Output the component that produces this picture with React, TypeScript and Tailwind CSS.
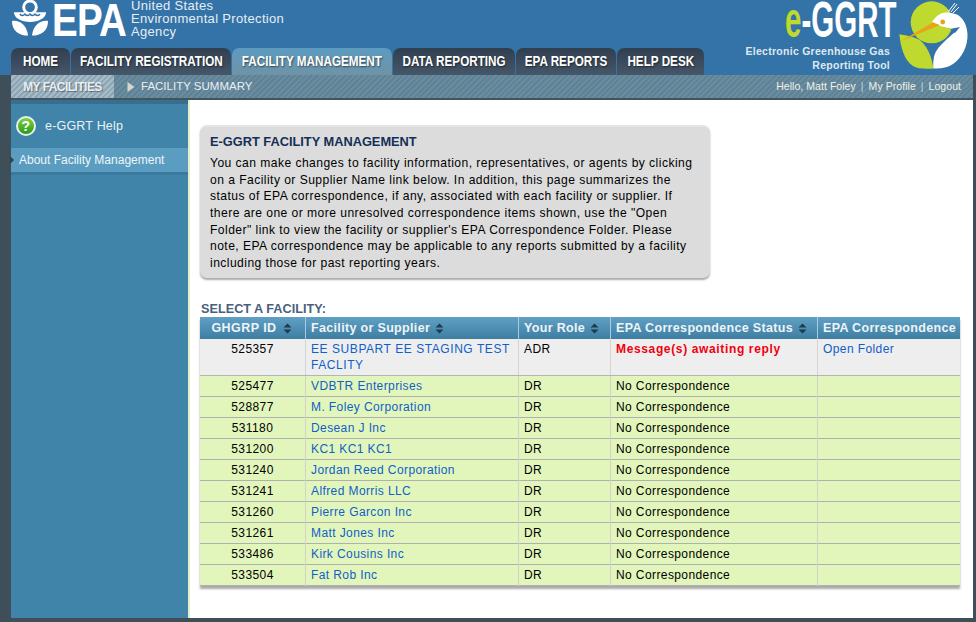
import React from "react";

const rows: [string, string][] = [
  ["525477", "VDBTR Enterprises"],
  ["528877", "M. Foley Corporation"],
  ["531180", "Desean J Inc"],
  ["531200", "KC1 KC1 KC1"],
  ["531240", "Jordan Reed Corporation"],
  ["531241", "Alfred Morris LLC"],
  ["531260", "Pierre Garcon Inc"],
  ["531261", "Matt Jones Inc"],
  ["533486", "Kirk Cousins Inc"],
  ["533504", "Fat Rob Inc"],
];

const Sort = () => (
  <svg width="9" height="11" viewBox="0 0 9 11" className="inline-block shrink-0">
    <path d="M4.5 0.5 L8.5 4.5 H0.5 Z M4.5 10.5 L8.5 6.5 H0.5 Z" fill="#1f3a4d" />
  </svg>
);

const Tab = ({ label, w, active }: { label: string; w: string; active?: boolean }) => (
  <div
    className={
      "h-[27px] rounded-t-[7px] flex items-center justify-center text-[15px] font-bold text-white " +
      w +
      (active
        ? " bg-gradient-to-b from-[#5b9bc0] to-[#6f93a6]"
        : " bg-gradient-to-b from-[#303f50] to-[#46576a]")
    }
  >
    <span className="inline-block whitespace-nowrap scale-x-[0.78] [text-shadow:1px_1px_2px_rgba(0,0,0,0.55)]">{label}</span>
  </div>
);

const EpaMark = () => (
  <svg width="37" height="37" viewBox="0 0 38 37" className="shrink-0">
    <circle cx="18.5" cy="7" r="6.5" fill="none" stroke="#fff" strokeWidth="3" />
    <path d="M2 12 H35 C35 18 27 22 18.5 22 C10 22 2 18 2 12 Z" fill="#fff" />
    <path d="M8 14 q3 3 5.2 0 q3 3 5.2 0 q3 3 5.2 0 q3 3 5.2 0" stroke="#3473a8" strokeWidth="1.5" fill="none" />
    <path d="M0 21 C8 20 15 25 16.5 36 C7 36 0 31 0 21 Z" fill="#fff" />
    <path d="M37 21 C29 20 22 25 20.5 36 C30 36 37 31 37 21 Z" fill="#fff" />
  </svg>
);

const Bird = () => (
  <svg width="72" height="72" viewBox="0 0 72 72" className="shrink-0">
    <circle cx="33.7" cy="22.3" r="21" fill="#bfd92f" />
    <path d="M1.3 34.3 C12 36 20 38 24 42 C30 48 34 58 35.3 68.5 C28 69 20 69 15 66 C6 60 3 48 1.3 34.3 Z" fill="#bfd92f" />
    <path d="M34 21.7 C38 16 42 13 46 12.7 C50 12 56 13 60 15 C66 19 69 26 69.5 34 C70 46 64 58 55 64 C49 68 42 69 35.3 68.5 C35 60 36 54 39 50 C42 45 50 38 57 32 L52 28 C46 27 40 26 34 21.7 Z" fill="#fff" />
    <path d="M52 29 L62 27 L57 33 Z" fill="#3473a8" />
    <path d="M3 41 L35 22.5 L42 25 L20 34 Z" fill="#e8a317" />
    <circle cx="44.7" cy="22" r="2.4" fill="#e8a317" />
    <path d="M50 12 L57 3 M53 12 L59 4 M55 13 L61 7" stroke="#fff" strokeWidth="1" fill="none" />
  </svg>
);

export default function App() {
  return (
    <div className="w-[976px] h-[622px] overflow-hidden bg-[#3f4f59] flex flex-col font-['Liberation_Sans',Arial,sans-serif]">
      <header className="h-[75px] shrink-0 bg-[#3473a8] flex justify-between">
        <div className="flex flex-col justify-between pl-[11px]">
          <div className="flex items-start pl-[1px] h-[37px]">
            <EpaMark />
            <div className="w-[76px] h-[37px] ml-[3px] mr-[3px]">
              <span className="inline-block whitespace-nowrap text-white font-bold text-[47px] leading-[37px] tracking-[-1px] scale-x-[0.82] origin-left mt-[1px]">EPA</span>
            </div>
            <div className="text-[#e6eef4] text-[13px] leading-[13px] tracking-[0.33px] -mt-[1px]">
              United States
              <br />
              Environmental Protection
              <br />
              Agency
            </div>
          </div>
          <nav className="flex gap-[1px]">
            <Tab label="HOME" w="w-[59px]" />
            <Tab label="FACILITY REGISTRATION" w="w-[160px]" />
            <Tab label="FACILITY MANAGEMENT" w="w-[160px]" active />
            <Tab label="DATA REPORTING" w="w-[122px]" />
            <Tab label="EPA REPORTS" w="w-[100px]" />
            <Tab label="HELP DESK" w="w-[87px]" />
          </nav>
        </div>
        <div className="flex items-start pr-[6px]">
          <div className="flex flex-col items-end mr-[8px]">
            <div className="w-[105px] h-[38px] mt-[1px]">
              <div className="inline-block whitespace-nowrap text-[50px] leading-[38px] font-bold scale-x-[0.59] origin-left">
                <span className="text-[#bfd92f]">e</span>
                <span className="text-white">-GGRT</span>
              </div>
            </div>
            <div className="text-[#dfe9f0] text-[10.5px] font-bold text-right leading-[14px] mt-[5px] tracking-[0.27px]">
              Electronic Greenhouse Gas
              <br />
              Reporting Tool
            </div>
          </div>
          <Bird />
        </div>
      </header>

      <div className="h-[25px] shrink-0 ml-[11px] mr-[3px] flex items-center justify-between bg-[repeating-linear-gradient(135deg,#5f8296_0,#5f8296_2px,#6a8c9f_2px,#6a8c9f_4px)] border-b-[2px] border-[#44545e] text-[12px]">
        <div className="flex items-center h-full">
          <div className="w-[103px] h-full flex items-center justify-center font-bold text-[#e8eff3] bg-[repeating-linear-gradient(135deg,#8ca6b5_0,#8ca6b5_2px,#a7bbc6_2px,#a7bbc6_4px)] [text-shadow:1px_1px_1px_rgba(0,0,0,0.4)] tracking-[-0.55px]">
            MY FACILITIES
          </div>
          <svg width="8" height="10" viewBox="0 0 8 10" className="ml-[13px]">
            <path d="M0.5 0 L7.5 5 L0.5 10 Z" fill="#d6d6d0" />
          </svg>
          <span className="ml-[6px] text-[#e8eff3] text-[11.5px]">FACILITY SUMMARY</span>
        </div>
        <div className="text-[10.5px] flex items-center gap-[5px] pr-[12px] tracking-[0.05px] text-[#eef3e6]">
          <span>Hello, Matt Foley</span>
          <span className="text-[#b9d7e6]">|</span>
          <span>My Profile</span>
          <span className="text-[#b9d7e6]">|</span>
          <span>Logout</span>
        </div>
      </div>

      <div className="flex-1 min-h-0 ml-[11px] mr-[3px] mb-[4px] flex bg-white">
        <aside className="w-[177px] shrink-0 bg-[#4084a9] border-t-[4px] border-[#366f8f]">
          <div className="h-[44px] flex items-center pl-[5px] text-[12.5px] tracking-[0.2px] text-[#eaf2f6]">
            <span className="w-[20px] h-[20px] rounded-full bg-gradient-to-b from-[#7fd13b] to-[#1f9a1f] border-[2px] border-[#e8f0e8] flex items-center justify-center text-white font-bold text-[14px] leading-none">
              ?
            </span>
            <span className="ml-[9px]">e-GGRT Help</span>
          </div>
          <div className="h-[24px] relative flex items-center pl-[8px] text-[12px] text-[#eef5f8] bg-[#5a9dc1]">
            <span className="absolute -left-[1px] top-[8px] w-0 h-0 border-y-[4px] border-y-transparent border-l-[4px] border-l-[#33414b]" />
            About Facility Management
          </div>
          <div className="h-[3px] bg-[#3a7a9e]" />
        </aside>
        <div className="w-[2px] shrink-0 bg-[#e3efc6]" />

        <main className="flex-1 min-w-0 pl-[10px] pt-[25px] text-[12px] text-black">
          <section className="w-[510px] h-[153px] bg-[#dcdcdc] rounded-[7px] border-t-[2px] border-[#e4e6e6] shadow-[0_2px_2px_#aaa] px-[10px] pt-[6px]">
            <h2 className="font-bold text-[12.8px] leading-[17px] text-[#142f56]">E-GGRT FACILITY MANAGEMENT</h2>
            <p className="leading-[16.67px] mt-[5px] text-[12.1px] tracking-[0.45px] whitespace-pre-line">
              {`You can make changes to facility information, representatives, or agents by clicking
on a Facility or Supplier Name link below. In addition, this page summarizes the
status of EPA correspondence, if any, associated with each facility or supplier. If
there are one or more unresolved correspondence items shown, use the "Open
Folder" link to view the facility or supplier's EPA Correspondence Folder. Please
note, EPA correspondence may be applicable to any reports submitted by a facility
including those for past reporting years.`}
            </p>
          </section>

          <div className="mt-[24px] font-bold text-[12.7px] leading-[15px] pl-[1px] text-[#4a5f7c]">SELECT A FACILITY:</div>

          <div className="w-[760px] shadow-[0_3px_2px_#aaa] tracking-[0.4px] text-[12px]">
            <div className="grid grid-cols-[106px_213px_92px_207px_142px] h-[22px] bg-gradient-to-b from-[#5fa0c4] to-[#3f7ea3] text-[#eef4f7] font-bold text-[12.5px] tracking-[0.33px]">
              <div className="flex items-center justify-center gap-[6px] border-r border-[#a9cbdd] pr-[2px] tracking-[0.45px]">GHGRP ID <Sort /></div>
              <div className="flex items-center gap-[5px] pl-[5px] border-r border-[#a9cbdd]">Facility or Supplier <Sort /></div>
              <div className="flex items-center gap-[5px] pl-[5px] border-r border-[#a9cbdd]">Your Role <Sort /></div>
              <div className="flex items-center gap-[5px] pl-[5px] border-r border-[#a9cbdd]">EPA Correspondence Status <Sort /></div>
              <div className="flex items-center pl-[5px] whitespace-nowrap">EPA Correspondence</div>
            </div>
            <div className="grid grid-cols-[106px_213px_92px_207px_142px] h-[37px] bg-[#eeeeee] border-b-[1.5px] border-[#b4b4b4] leading-[16px]">
              <div className="text-center pt-[2px] border-r border-[#d4d4d4]">525357</div>
              <div className="pl-[5px] pt-[2px] text-[#1060c8] border-r border-[#d4d4d4] tracking-[0.56px]">
                EE SUBPART EE STAGING TEST FACLITY
              </div>
              <div className="pl-[5px] pt-[2px] border-r border-[#d4d4d4]">ADR</div>
              <div className="pl-[5px] pt-[2px] font-bold text-[#f00010] border-r border-[#d4d4d4] tracking-[0.64px]">Message(s) awaiting reply</div>
              <div className="pl-[5px] pt-[2px] text-[#1060c8]">Open Folder</div>
            </div>
            {rows.map(([id, name]) => (
              <div
                key={id}
                className="grid grid-cols-[106px_213px_92px_207px_142px] h-[21px] bg-[#e2f6bb] border-b-[1.5px] border-[#b0b0b0] leading-[21px]"
              >
                <div className="text-center border-r border-[#d0d4c8]">{id}</div>
                <div className="pl-[5px] text-[#1060c8] border-r border-[#d0d4c8]">{name}</div>
                <div className="pl-[5px] border-r border-[#d0d4c8]">DR</div>
                <div className="pl-[5px] border-r border-[#d0d4c8]">No Correspondence</div>
                <div />
              </div>
            ))}
          </div>
        </main>
      </div>
    </div>
  );
}
